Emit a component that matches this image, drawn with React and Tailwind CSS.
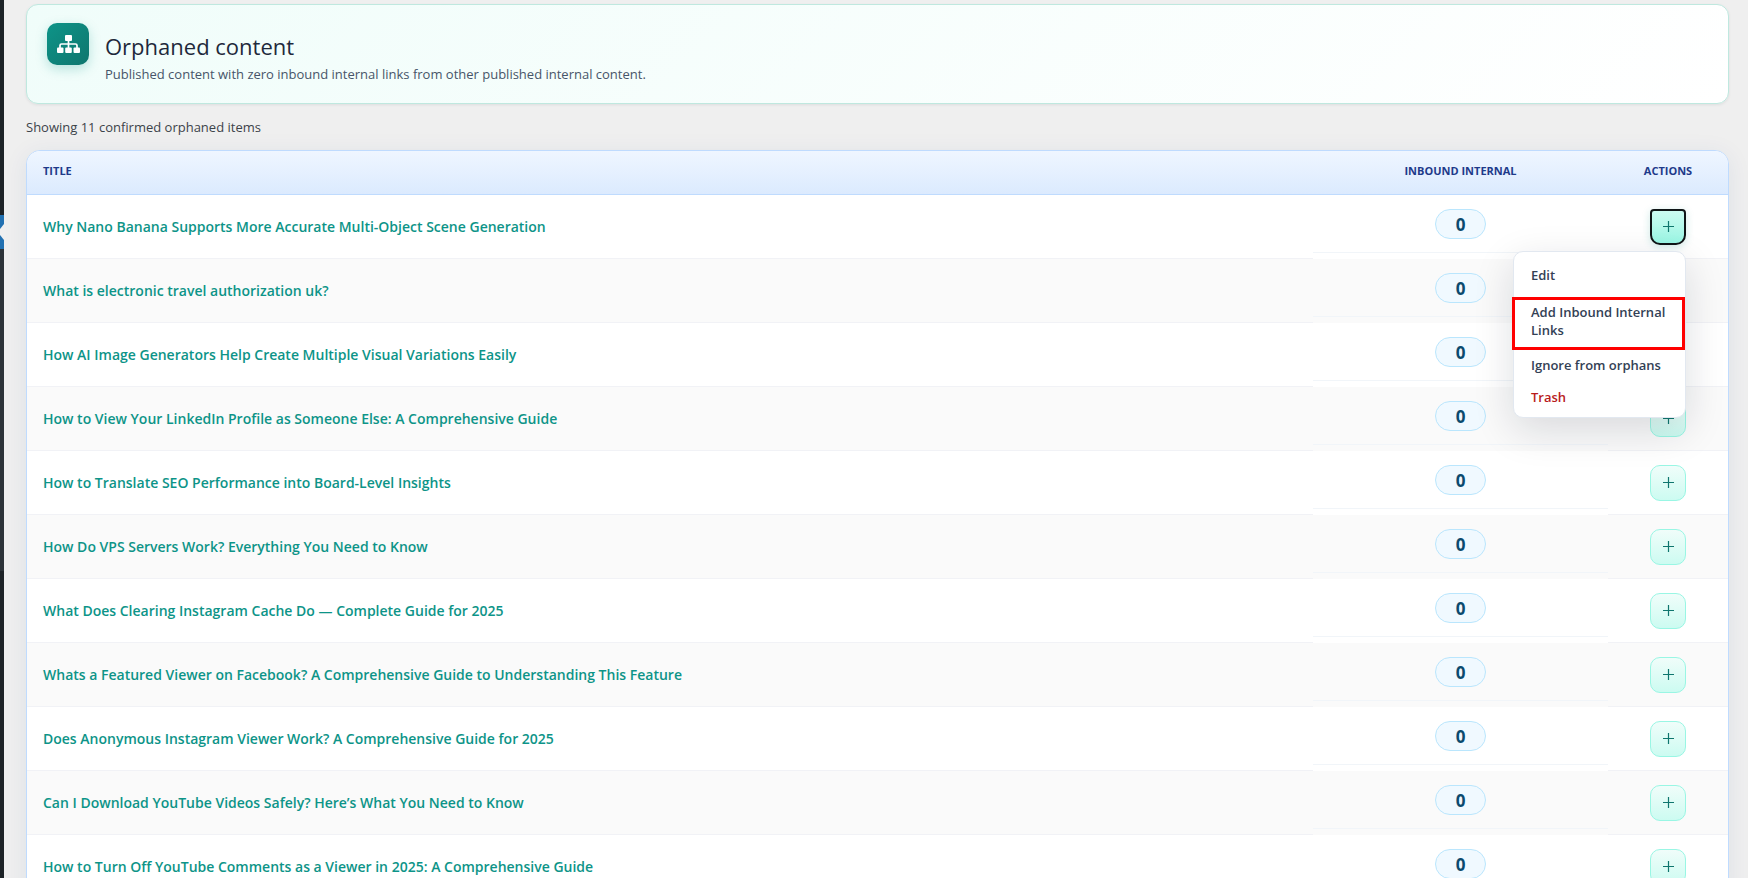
const items = [
  "Why Nano Banana Supports More Accurate Multi-Object Scene Generation",
  "What is electronic travel authorization uk?",
  "How AI Image Generators Help Create Multiple Visual Variations Easily",
  "How to View Your LinkedIn Profile as Someone Else: A Comprehensive Guide",
  "How to Translate SEO Performance into Board-Level Insights",
  "How Do VPS Servers Work? Everything You Need to Know",
  "What Does Clearing Instagram Cache Do — Complete Guide for 2025",
  "Whats a Featured Viewer on Facebook? A Comprehensive Guide to Understanding This Feature",
  "Does Anonymous Instagram Viewer Work? A Comprehensive Guide for 2025",
  "Can I Download YouTube Videos Safely? Here’s What You Need to Know",
  "How to Turn Off YouTube Comments as a Viewer in 2025: A Comprehensive Guide",
];

function SitemapIcon() {
  return (
    <svg
      className="w-[23px] h-[18px]"
      viewBox="0 0 23 18"
      fill="currentColor"
      aria-hidden="true"
    >
      <rect x="8" y="0" width="7" height="6" rx="1" />
      <rect x="0" y="12.5" width="6.5" height="5.5" rx="1" />
      <rect x="8.2" y="12.5" width="6.6" height="5.5" rx="1" />
      <rect x="16.5" y="12.5" width="6.5" height="5.5" rx="1" />
      <path
        d="M11.5 5v8M3 13v-2.5q0-1.500 1.500-1.500h14q1.500 0 1.500 1.500V13"
        fill="none"
        stroke="currentColor"
        strokeWidth="1.700"
      />
    </svg>
  );
}

function PlusIcon() {
  return (
    <svg
      className="w-[11px] h-[11px]"
      viewBox="0 0 11 11"
      fill="none"
      stroke="currentColor"
      strokeWidth="1.200"
      aria-hidden="true"
    >
      <path d="M5.5 0v11M0 5.5h11" />
    </svg>
  );
}

// Edge of the collapsed admin menu
function Sidebar() {
  return (
    <aside className="w-1 shrink-0 flex flex-col bg-[#1d2327]">
      <div className="h-[215px]"></div>
      <div className="h-[34px] bg-[#2271b1] flex items-center">
        <svg className="w-1 h-4" viewBox="0 0 4 16" fill="#efefef">
          <path d="M4 0v16L0 11V5z" />
        </svg>
      </div>
      <div className="h-[322px] bg-[#2c3338]"></div>
    </aside>
  );
}

function ActionsMenu() {
  return (
    <div className="absolute right-0 top-[42px] z-10 w-[173px] pt-[7px] pb-1 flex flex-col bg-white border border-[#e2e8f0] rounded-[10px] shadow-[0_12px_40px_rgba(15,23,42,0.14)] text-[13px] leading-[18px] font-semibold text-[#334155]">
      <button className="px-[17px] py-[7px] text-left">Edit</button>
      <div className="relative">
        <button className="w-full px-[17px] pt-3 pb-2.5 text-left">
          Add Inbound Internal Links
        </button>
        <span className="absolute -left-0.5 right-0 top-1.5 -bottom-px border-[3px] border-[#ff0000] pointer-events-none"></span>
      </div>
      <button className="px-[17px] py-[7px] text-left">
        Ignore from orphans
      </button>
      <button className="px-[17px] py-[7px] text-left text-[#b91c1c]">
        Trash
      </button>
    </div>
  );
}

function Row({ title, open }) {
  return (
    <tr className="h-16 odd:bg-white even:bg-[#fafafa]">
      <td className="px-4 pb-0.5 border-b border-[#f1f2f6]">
        <a href="#" className="text-sm font-semibold text-[#0d9488]">
          {title}
        </a>
      </td>
      <td className="p-0 align-top">
        <div className="h-[58px] pt-3.5 flex items-start justify-center border-b border-[#f1f5f9]">
          <span className="w-[51px] h-[30px] flex items-center justify-center rounded-full bg-[#f0f9ff] border border-[#bae6fd] text-[17px] leading-none font-bold text-[#0c4a6e]">
            0
          </span>
        </div>
      </td>
      <td className="p-0 border-b border-[#f1f2f6]">
        <div className="relative w-9 mx-auto">
          {open ? (
            <button
              aria-label="Actions"
              aria-expanded="true"
              className="w-9 h-9 flex items-center justify-center border-2 border-[#101517] rounded-t-[4px] rounded-b-[10px] bg-linear-to-b from-[#ccfbf1] to-[#99f6e4] text-[#0f766e] shadow-[0_2px_8px_rgba(13,148,136,0.2)]"
            >
              <PlusIcon />
            </button>
          ) : (
            <button
              aria-label="Actions"
              className="w-9 h-9 flex items-center justify-center border border-[#99f6e4] rounded-[10px] bg-linear-to-b from-[#f0fdfa] to-[#ccfbf1] text-[#0f766e]"
            >
              <PlusIcon />
            </button>
          )}
          {open && <ActionsMenu />}
        </div>
      </td>
    </tr>
  );
}

export default function App() {
  return (
    <div className="h-screen overflow-hidden flex bg-[#efefef] font-['Open_Sans',sans-serif]">
      <Sidebar />

      <main className="flex-1 min-w-0 pt-1 pl-[22px] pr-[19px]">
        {/* Page header */}
        <header className="h-[100px] px-5 pt-[18px] flex items-start gap-4 rounded-xl border border-[#bfe8df] bg-linear-135 from-[#f0fdfa] to-white shadow-[0_1px_3px_rgba(15,23,42,0.08)]">
          <div className="w-[42px] h-[42px] shrink-0 flex items-center justify-center rounded-[10px] bg-linear-135 from-[#0d9488] to-[#0f766e] text-white shadow-[0_4px_12px_rgba(13,148,136,0.25)]">
            <SitemapIcon />
          </div>
          <div className="pt-[7px]">
            <h1 className="text-[22px] leading-8 text-[#1e293b]">
              Orphaned content
            </h1>
            <p className="mt-0.5 text-[13px] leading-5 text-[#475569]">
              Published content with zero inbound internal links from other
              published internal content.
            </p>
          </div>
        </header>

        <p className="py-[13px] text-[13px] leading-5 text-[#3c434a]">
          Showing 11 confirmed orphaned items
        </p>

        {/* Orphaned items */}
        <div className="rounded-[14px] border border-[#bfdbfe] bg-white shadow-[0_4px_24px_rgba(30,58,138,0.08)]">
          <table className="w-full table-fixed border-separate border-spacing-0">
            <thead className="text-[11px] uppercase text-[#1e3a8a]">
              <tr className="h-11 bg-linear-to-b from-[#eff6ff] to-[#dbeafe]">
                <th className="px-4 pb-0.5 text-left font-bold border-b border-[#bfdbfe] rounded-tl-[13px]">
                  Title
                </th>
                <th className="w-[295px] px-0 pb-0.5 text-center font-bold border-b border-[#bfdbfe]">
                  Inbound internal
                </th>
                <th className="w-[120px] px-0 pb-0.5 text-center font-bold border-b border-[#bfdbfe] rounded-tr-[13px]">
                  Actions
                </th>
              </tr>
            </thead>
            <tbody>
              {items.map((title, i) => (
                <Row key={title} title={title} open={i === 0} />
              ))}
            </tbody>
          </table>
        </div>
      </main>
    </div>
  );
}
